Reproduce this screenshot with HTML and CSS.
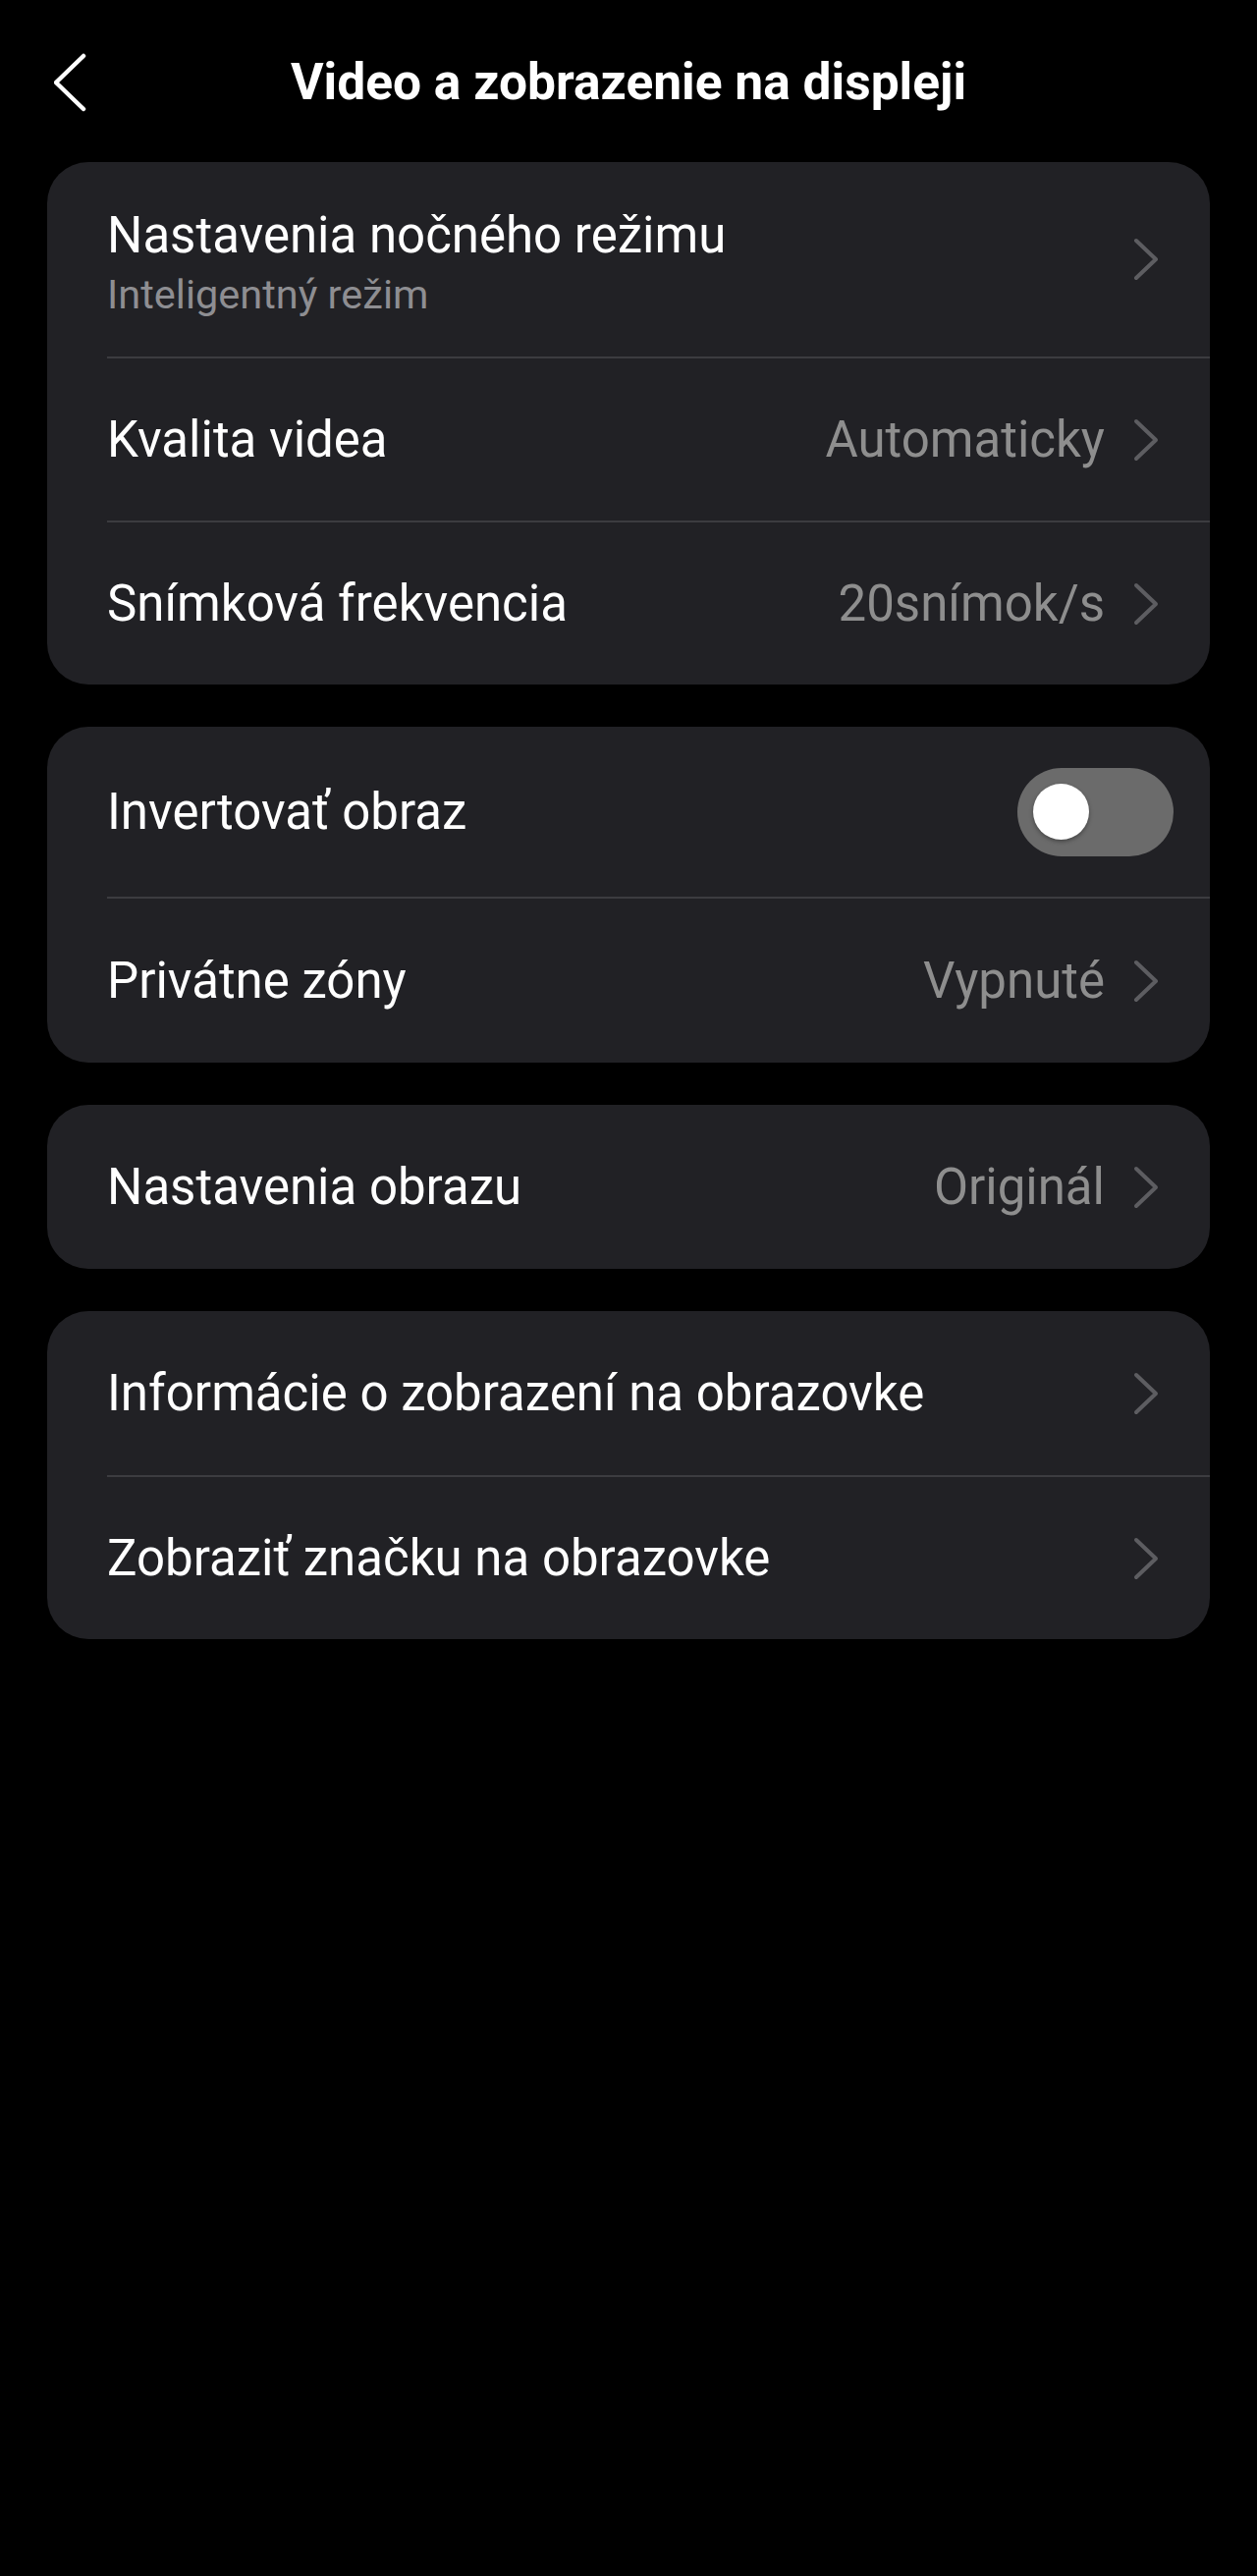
FILE: index.html
```html
<!DOCTYPE html>
<html lang="sk">
<head>
<meta charset="utf-8">
<title>Video a zobrazenie na displeji</title>
<link rel="stylesheet" href="styles.css">
</head>
<body>
<header class="topbar">
  <div class="topbar__left">
    <svg class="back" width="34" height="60" viewBox="0 0 34 60" aria-label="Späť">
      <polyline points="30,3 2,30 30,57" fill="none" stroke="#ffffff" stroke-width="4.5" stroke-linecap="round" stroke-linejoin="round"/>
    </svg>
  </div>
  <h1 class="title">Video a zobrazenie na displeji</h1>
  <div class="topbar__right"></div>
</header>

<main class="groups">
  <section class="card">
    <div class="row row--tall">
      <div class="row__text">
        <div class="row__label">Nastavenia nočného režimu</div>
        <div class="row__sub">Inteligentný režim</div>
      </div>
      <svg class="chev" width="26" height="44" viewBox="0 0 26 44"><polyline points="3,3 23,22 3,41" fill="none" stroke="#5d5d61" stroke-width="4" stroke-linecap="round" stroke-linejoin="round"/></svg>
    </div>
    <div class="row">
      <div class="row__label">Kvalita videa</div>
      <div class="row__value">Automaticky</div>
      <svg class="chev" width="26" height="44" viewBox="0 0 26 44"><polyline points="3,3 23,22 3,41" fill="none" stroke="#5d5d61" stroke-width="4" stroke-linecap="round" stroke-linejoin="round"/></svg>
    </div>
    <div class="row">
      <div class="row__label">Snímková frekvencia</div>
      <div class="row__value">20snímok/s</div>
      <svg class="chev" width="26" height="44" viewBox="0 0 26 44"><polyline points="3,3 23,22 3,41" fill="none" stroke="#5d5d61" stroke-width="4" stroke-linecap="round" stroke-linejoin="round"/></svg>
    </div>
  </section>

  <section class="card">
    <div class="row row--switch">
      <div class="row__label">Invertovať obraz</div>
      <div class="switch"><div class="switch__knob"></div></div>
    </div>
    <div class="row row--after">
      <div class="row__label">Privátne zóny</div>
      <div class="row__value">Vypnuté</div>
      <svg class="chev" width="26" height="44" viewBox="0 0 26 44"><polyline points="3,3 23,22 3,41" fill="none" stroke="#5d5d61" stroke-width="4" stroke-linecap="round" stroke-linejoin="round"/></svg>
    </div>
  </section>

  <section class="card">
    <div class="row">
      <div class="row__label">Nastavenia obrazu</div>
      <div class="row__value">Originál</div>
      <svg class="chev" width="26" height="44" viewBox="0 0 26 44"><polyline points="3,3 23,22 3,41" fill="none" stroke="#5d5d61" stroke-width="4" stroke-linecap="round" stroke-linejoin="round"/></svg>
    </div>
  </section>

  <section class="card">
    <div class="row">
      <div class="row__label">Informácie o zobrazení na obrazovke</div>
      <svg class="chev" width="26" height="44" viewBox="0 0 26 44"><polyline points="3,3 23,22 3,41" fill="none" stroke="#5d5d61" stroke-width="4" stroke-linecap="round" stroke-linejoin="round"/></svg>
    </div>
    <div class="row">
      <div class="row__label">Zobraziť značku na obrazovke</div>
      <svg class="chev" width="26" height="44" viewBox="0 0 26 44"><polyline points="3,3 23,22 3,41" fill="none" stroke="#5d5d61" stroke-width="4" stroke-linecap="round" stroke-linejoin="round"/></svg>
    </div>
  </section>
</main>
</body>
</html>
```
FILE: styles.css
```css
* { box-sizing: border-box; }

html, body {
  margin: 0;
  padding: 0;
  background: #000000;
}

body {
  min-height: 2623px;
  font-family: Roboto, "Noto Sans", "Liberation Sans", sans-serif;
  color: #ffffff;
}

.topbar {
  height: 165px;
  padding-top: 2px;
  display: grid;
  grid-template-columns: 1fr auto 1fr;
  align-items: center;
}

.topbar__left {
  padding-left: 55px;
  display: flex;
  align-items: center;
}

.back { display: block; }

.title {
  margin: 0;
  font-size: 51.5px;
  line-height: 60px;
  font-weight: 700;
  color: #ffffff;
  white-space: nowrap;
}

.groups {
  display: flex;
  flex-direction: column;
  gap: 43px;
  padding: 0 48px;
}

.card {
  background: #212125;
  border-radius: 42px;
  padding-left: 61px;
}

.row {
  height: 167px;
  display: flex;
  align-items: center;
  padding-right: 52px;
  border-top: 2px solid #3c3c40;
}

.row:first-child { border-top: none; }

.row--tall { height: 198px; }

.row--switch {
  height: 173px;
  padding-right: 37px;
}

.row--after { height: 169px; }

.row__text {
  display: flex;
  flex-direction: column;
  flex: 1;
  padding-top: 6px;
}

.row__label {
  flex: 1;
  font-size: 51px;
  line-height: 60px;
  color: #ffffff;
  white-space: nowrap;
}

.row__sub {
  margin-top: 6px;
  font-size: 41.5px;
  line-height: 48px;
  color: #8e8e92;
}

.row__value {
  font-size: 51px;
  line-height: 60px;
  color: #8e8e8e;
  margin-right: 29px;
  white-space: nowrap;
}

.chev { display: block; flex: none; }

.switch {
  width: 159px;
  height: 90px;
  border-radius: 45px;
  background: #6b6b6b;
  display: flex;
  align-items: center;
  padding-left: 16px;
  flex: none;
}

.switch__knob {
  width: 57px;
  height: 57px;
  border-radius: 50%;
  background: #ffffff;
  box-shadow: 0 2px 4px rgba(0, 0, 0, 0.35);
}
```
